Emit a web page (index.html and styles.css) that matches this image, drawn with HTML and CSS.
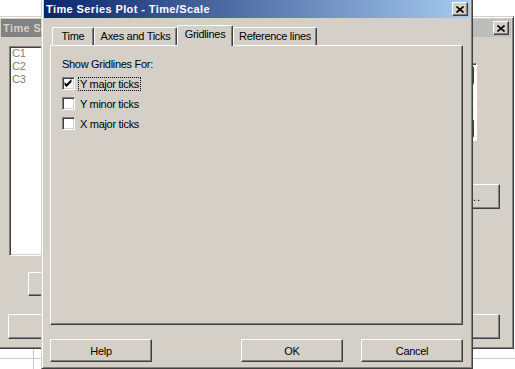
FILE: index.html
```html
<!DOCTYPE html>
<html lang="en">
<head>
<meta charset="UTF-8">
<title>Time Series Plot - Time/Scale</title>
<link rel="stylesheet" href="styles.css">
</head>
<body>

<!-- worksheet grid behind the windows -->
<div class="sheet"></div>

<!-- main Time Series Plot window (inactive, behind) -->
<div class="window back">
  <div class="titlebar">
    <span class="title-text">Time Series Plot</span>
    <span class="close"><svg width="8" height="7" viewBox="0 0 8 7"><path d="M0.5 0.5 L7.5 6.5 M7.5 0.5 L0.5 6.5" stroke="#000" stroke-width="1.6"/></svg></span>
  </div>
  <div class="back-body">
    <div class="back-left">
      <div class="listbox">
        <div>C1</div>
        <div>C2</div>
        <div>C3</div>
      </div>
      <div class="button back-select"></div>
      <div class="button back-help"></div>
    </div>
    <div class="back-right">
      <div class="sunken-box">
        <div class="scrollbar">
          <div class="scroll-btn"></div>
          <div class="scroll-track"></div>
          <div class="scroll-btn"></div>
        </div>
      </div>
      <div class="button back-labels"><span class="dots">..</span></div>
      <div class="button back-ok"></div>
    </div>
  </div>
</div>

<!-- Time/Scale dialog (active) -->
<div class="window dialog">
  <div class="titlebar">
    <span class="title-text">Time Series Plot - Time/Scale</span>
    <span class="close"><svg width="8" height="7" viewBox="0 0 8 7"><path d="M0.5 0.5 L7.5 6.5 M7.5 0.5 L0.5 6.5" stroke="#000" stroke-width="1.6"/></svg></span>
  </div>
  <div class="dialog-body">
    <div class="tabs">
      <div class="tab tab-time">Time</div>
      <div class="tab tab-axes">Axes and Ticks</div>
      <div class="tab tab-grid selected">Gridlines</div>
      <div class="tab tab-ref">Reference lines</div>
    </div>
    <div class="panel">
      <div class="group-label">Show Gridlines For:</div>
      <div class="check-row">
        <span class="checkbox"><svg width="11" height="11" viewBox="0 0 11 11"><polygon points="1.5,4 3.5,6 8.5,1 8.5,4 3.5,9 1.5,7" fill="#000"/></svg></span>
        <span class="check-label focused">Y major ticks</span>
      </div>
      <div class="check-row">
        <span class="checkbox"></span>
        <span class="check-label">Y minor ticks</span>
      </div>
      <div class="check-row">
        <span class="checkbox"></span>
        <span class="check-label">X major ticks</span>
      </div>
    </div>
    <div class="button-row">
      <div class="button">Help</div>
      <div class="spacer"></div>
      <div class="button">OK</div>
      <div class="button">Cancel</div>
    </div>
  </div>
</div>

</body>
</html>
```

FILE: styles.css
```css
body {
  margin: 0;
  width: 515px;
  height: 369px;
  position: relative;
  overflow: hidden;
  background-color: #fff;
  font-family: "Liberation Sans", Arial, sans-serif;
  font-size: 11px;
  letter-spacing: -0.3px;
  color: #000;
}

/* grid lines of the worksheet under the windows */
.sheet {
  position: absolute;
  left: 0;
  top: 349px;
  width: 515px;
  height: 20px;
  background:
    linear-gradient(#c8c8c8, #c8c8c8) 0 9px / 100% 1px no-repeat,
    linear-gradient(#c8c8c8, #c8c8c8) 33px 0 / 1px 100% no-repeat;
}

/* Win2k style window frame */
.window {
  position: absolute;
  box-sizing: border-box;
  display: flex;
  flex-direction: column;
  padding: 2px;
  background-color: #d4d0c8;
  border: 1px solid;
  border-color: #d4d0c8 #404040 #404040 #d4d0c8;
  box-shadow: inset 1px 1px #fff, inset -1px -1px #808080;
}

.back {
  left: -2px;
  top: 16px;
  width: 516px;
  height: 333px;
}

.dialog {
  left: 41px;
  top: -3px;
  width: 432px;
  height: 372px;
}

.titlebar {
  height: 18px;
  flex-shrink: 0;
  display: flex;
  align-items: center;
  padding: 0 2px;
  font-weight: bold;
  letter-spacing: 0.4px;
  color: #fff;
}

.dialog .titlebar {
  background: linear-gradient(to right, #0a246a, #a6caf0);
}

.back .titlebar {
  background: linear-gradient(to right, #808080, #c0c0c0);
  color: #d4d0c8;
}

.title-text {
  flex: 1;
  white-space: nowrap;
  overflow: hidden;
  line-height: 13px;
}

/* only the start of the back title shows left of the dialog */
.back .title-text {
  flex: none;
  width: 40px;
  margin-right: auto;
}

.close {
  width: 16px;
  height: 14px;
  box-sizing: border-box;
  display: flex;
  align-items: center;
  justify-content: center;
  background-color: #d4d0c8;
  border: 1px solid;
  border-color: #fff #404040 #404040 #fff;
  box-shadow: inset -1px -1px #808080;
}

/* raised push button */
.button {
  box-sizing: border-box;
  height: 23px;
  width: 102px;
  display: flex;
  align-items: center;
  justify-content: center;
  background-color: #d4d0c8;
  border: 1px solid;
  border-color: #fff #404040 #404040 #fff;
  box-shadow: inset -1px -1px #808080;
  white-space: nowrap;
}

/* ---------- back window contents ---------- */

.back-body {
  flex: 1;
  display: flex;
  justify-content: space-between;
  padding-right: 11px;
}

.back-left {
  display: flex;
  flex-direction: column;
  align-items: flex-start;
  padding-left: 8px;
}

.listbox {
  box-sizing: border-box;
  width: 90px;
  height: 210px;
  margin-top: 9px;
  padding-left: 2px;
  line-height: 13px;
  color: #808080;
  background-color: #fff;
  border: 1px solid;
  border-color: #808080 #fff #fff #808080;
  box-shadow: inset 1px 1px #404040, inset -1px -1px #d4d0c8;
}

.back-select {
  width: 70px;
  height: 24px;
  margin-top: 16px;
  margin-left: 19px;
}

.back-help {
  width: 90px;
  height: 25px;
  margin-top: 18px;
  margin-left: -1px;
}

.back-right {
  display: flex;
  flex-direction: column;
  align-items: flex-end;
}

.sunken-box {
  box-sizing: border-box;
  width: 40px;
  height: 78px;
  margin-top: 26px;
  margin-right: 23px;
  display: flex;
  justify-content: flex-end;
  padding: 2px;
  background-color: #fff;
  border: 1px solid;
  border-color: #808080 #fff #fff #808080;
  box-shadow: inset 1px 1px #404040;
}

.scrollbar {
  width: 6px;
  display: flex;
  flex-direction: column;
}

.scroll-btn {
  height: 19px;
  box-sizing: border-box;
  background-color: #d4d0c8;
  border: 1px solid #404040;
  border-radius: 0 2px 2px 0;
}

.scroll-track {
  flex: 1;
  background: repeating-linear-gradient(45deg, #fff 0 1px, #e8e6e0 1px 2px);
}

.back-labels {
  width: 84px;
  height: 25px;
  margin-top: 43px;
  justify-content: flex-start;
  padding-left: 56px;
}

.dots {
  letter-spacing: 1px;
}

.back-ok {
  width: 84px;
  height: 25px;
  margin-top: 105px;
}

/* ---------- dialog contents ---------- */

.dialog-body {
  flex: 1;
  display: flex;
  flex-direction: column;
  padding: 7px 7px 4px 6px;
}

.tabs {
  display: flex;
  align-items: flex-end;
  height: 20px;
  padding-left: 2px;
  position: relative;
  z-index: 1;
}

.tab {
  box-sizing: border-box;
  height: 18px;
  padding-top: 2px;
  line-height: 13px;
  text-align: center;
  white-space: nowrap;
  background-color: #d4d0c8;
  border: 1px solid;
  border-bottom: none;
  border-color: #fff #404040 #fff #fff;
  border-radius: 2px 2px 0 0;
  box-shadow: inset -1px 0 #808080;
}

.tab-time { width: 42px; }
.tab-axes { width: 83px; }
.tab-grid { width: 56px; }
.tab-ref { width: 84px; }

.tab.selected {
  height: 21px;
  margin-bottom: -1px;
  padding-top: 2px;
}

.panel {
  flex: 1;
  box-sizing: border-box;
  padding: 12px 0 0 11px;
  border: 1px solid;
  border-color: #fff #404040 #404040 #fff;
  box-shadow: inset -1px -1px #808080;
}

.group-label {
  line-height: 13px;
  height: 13px;
}

.check-row {
  display: flex;
  align-items: flex-start;
  height: 20px;
}

.group-label + .check-row {
  margin-top: 6px;
}

.checkbox {
  box-sizing: border-box;
  width: 13px;
  height: 13px;
  flex-shrink: 0;
  display: flex;
  background-color: #fff;
  border: 1px solid;
  border-color: #808080 #fff #fff #808080;
  box-shadow: inset 1px 1px #404040, inset -1px -1px #d4d0c8;
}

.check-label {
  margin-left: 3px;
  padding: 0 1px;
  line-height: 12px;
  border: 1px dotted transparent;
}

.check-label.focused {
  border-color: #000;
}

.button-row {
  display: flex;
  gap: 18px;
  margin-top: 14px;
}

.spacer {
  flex: 1;
}
```
